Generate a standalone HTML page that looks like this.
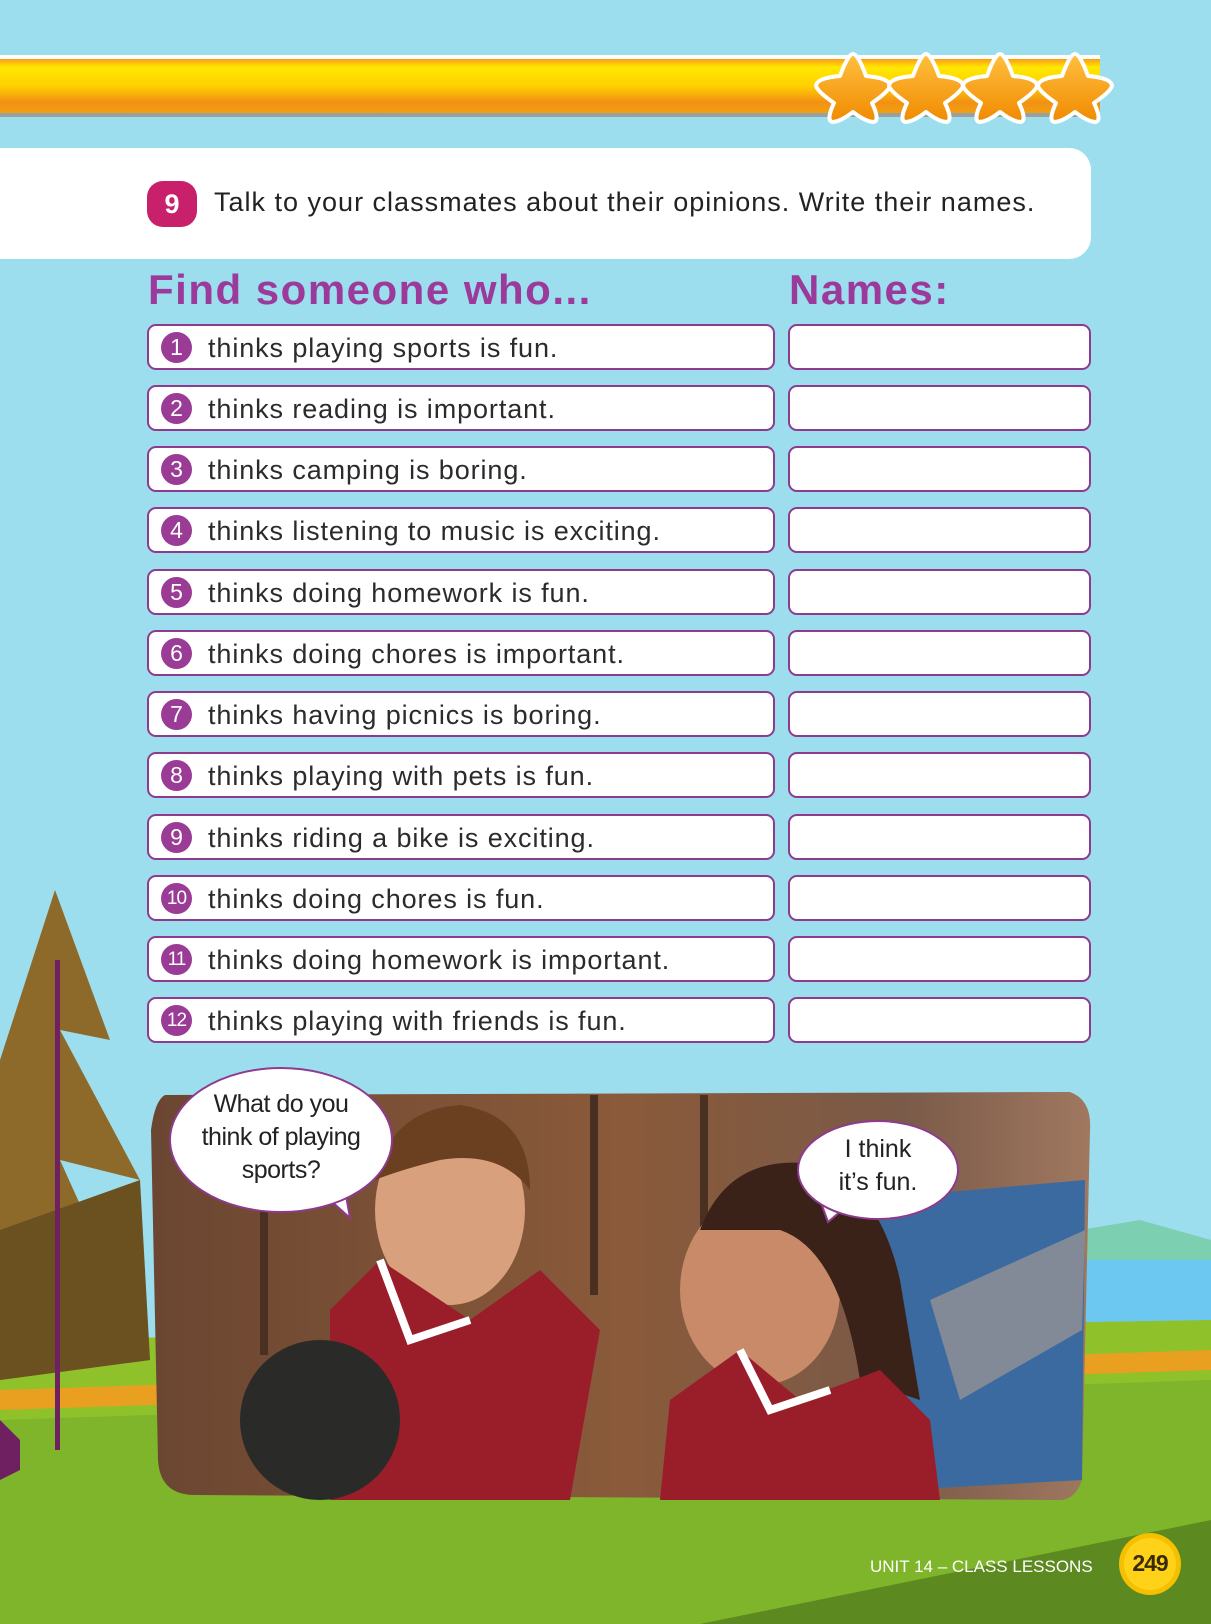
<!DOCTYPE html>
<html><head><meta charset="utf-8"><style>
*{margin:0;padding:0;box-sizing:border-box}
body{width:1211px;height:1624px;overflow:hidden;position:relative;background:#9cdeee;font-family:"Liberation Sans",sans-serif}
.abs{position:absolute}
.row{position:absolute;left:147px;width:628px;height:46px;background:#fff;border:2px solid #8e3a8e;border-radius:9px}
.nm{position:absolute;left:788px;width:303px;height:46px;background:#fff;border:2px solid #8e3a8e;border-radius:9px}
.num{position:absolute;left:12px;top:6px;width:31px;height:31px;border-radius:50%;background:#9a3b96;color:#fff;font-size:23px;text-align:center;line-height:31px}
.num.s{font-size:19px;letter-spacing:-1px}
.tx{position:absolute;left:59px;top:7px;font-size:27px;color:#2b2b2b;white-space:nowrap;letter-spacing:.9px}
</style></head><body>
<svg class="abs" style="left:0;top:0" width="1211" height="1624">
<defs>
<linearGradient id="st" x1="0" y1="0" x2="0" y2="1"><stop offset="0" stop-color="#ff9a1a"/><stop offset=".15" stop-color="#ffe800"/><stop offset=".5" stop-color="#ffd000"/><stop offset=".8" stop-color="#f39015"/><stop offset="1" stop-color="#f0a010"/></linearGradient>
<linearGradient id="sg" x1="0" y1="0" x2="0" y2="1"><stop offset="0" stop-color="#ffc040"/><stop offset="1" stop-color="#f08a00"/></linearGradient>
<linearGradient id="ph" x1="0" y1="0" x2="1" y2="0"><stop offset="0" stop-color="#6b4632"/><stop offset=".5" stop-color="#8a5a3a"/><stop offset=".8" stop-color="#7a5a48"/><stop offset="1" stop-color="#a07860"/></linearGradient>
</defs>
<rect x="0" y="55" width="1100" height="4" fill="#fff"/>
<rect x="0" y="59" width="1100" height="54" fill="url(#st)"/>
<rect x="0" y="113" width="1100" height="4" fill="#9aa0a0"/>
<g fill="url(#sg)" stroke="#fff" stroke-width="4" stroke-linejoin="round">
<path id="s1" d="M853 54 Q858 54 866 76 Q890 78 890 86 Q888 92 872 103 Q880 120 874 122 Q866 122 853 112 Q840 122 832 122 Q826 120 834 103 Q818 92 816 86 Q816 78 840 76 Q848 54 853 54 Z"/>
<use href="#s1" x="73"/><use href="#s1" x="147"/><use href="#s1" x="222"/>
</g>
<path d="M0 1250 L1211 1250 L1211 1624 L0 1624Z" fill="#9cdeee"/>
<path d="M1080 1230 L1140 1220 L1211 1240 L1211 1280 L1080 1280Z" fill="#7ccfb0"/>
<rect x="1080" y="1260" width="131" height="70" fill="#6cc8f0"/>
<path d="M0 1340 L1211 1320 L1211 1624 L0 1624Z" fill="#8fc12a"/>
<path d="M0 1390 L1211 1350 L1211 1370 L0 1410Z" fill="#e9a020"/>
<path d="M0 1420 L1211 1380 L1211 1624 L0 1624Z" fill="#7fb52a"/>
<path d="M700 1624 L1211 1520 L1211 1624Z" fill="#5c8a20"/>
<path d="M0 1060 L55 890 L110 1040 L60 1030 L140 1180 L60 1160 L150 1360 L0 1380Z" fill="#8e6a2a"/>
<path d="M0 1230 L140 1180 L150 1360 L0 1380Z" fill="#6b5020"/>
<rect x="55" y="960" width="5" height="490" fill="#6e2060"/>
<path d="M0 1420 L20 1440 L20 1470 L0 1480Z" fill="#6e2060"/>
<path d="M165 1095 L1070 1092 Q1092 1100 1090 1130 L1082 1480 Q1075 1500 1060 1500 L195 1495 Q160 1495 158 1460 L151 1130 Q155 1100 165 1095Z" fill="url(#ph)"/>
<rect x="260" y="1095" width="8" height="260" fill="#4a3020"/><rect x="590" y="1095" width="8" height="200" fill="#4a3020"/><rect x="700" y="1095" width="8" height="180" fill="#4a3020"/>
<path d="M860 1200 L1085 1180 L1082 1480 L900 1490Z" fill="#3a6aa0"/>
<path d="M930 1300 L1085 1230 L1082 1330 L960 1400Z" fill="#b0a090" opacity=".6"/>
<ellipse cx="450" cy="1210" rx="75" ry="95" fill="#d9a07e"/>
<path d="M375 1180 Q390 1110 460 1105 Q530 1115 530 1190 Q500 1150 440 1160 Q400 1170 375 1180Z" fill="#6a4020"/>
<path d="M330 1310 L380 1260 L470 1320 L540 1270 L600 1330 L570 1500 L330 1500Z" fill="#9a1e2a"/>
<path d="M380 1260 L410 1340 L470 1320" fill="none" stroke="#fff" stroke-width="8"/>
<circle cx="320" cy="1420" r="80" fill="#2a2a28"/>
<ellipse cx="760" cy="1290" rx="80" ry="95" fill="#c98a6a"/>
<path d="M700 1230 Q730 1150 820 1165 Q880 1190 900 1280 L920 1400 L860 1380 Q840 1250 780 1230Z" fill="#3a2218"/>
<path d="M670 1400 L740 1350 L800 1400 L880 1370 L930 1420 L940 1500 L660 1500Z" fill="#9a1e2a"/>
<path d="M740 1350 L770 1410 L830 1390" fill="none" stroke="#fff" stroke-width="8"/>
<path d="M330 1200 L350 1218 L345 1190Z" fill="#fff" stroke="#8e3a8e" stroke-width="2"/>
<ellipse cx="281" cy="1140" rx="111" ry="72" fill="#fff" stroke="#8e3a8e" stroke-width="2"/>
<path d="M820 1200 L828 1222 L848 1205Z" fill="#fff" stroke="#8e3a8e" stroke-width="2"/>
<ellipse cx="878" cy="1170" rx="80" ry="49" fill="#fff" stroke="#8e3a8e" stroke-width="2"/>
<circle cx="1150" cy="1564" r="31" fill="#f5c000"/>
<circle cx="1150" cy="1564" r="26" fill="#ffd21a"/>
</svg>
<div class="abs" style="left:0;top:148px;width:1091px;height:111px;background:#fff;border-radius:0 22px 22px 0"></div>
<div class="abs" style="left:147px;top:181px;width:50px;height:46px;border-radius:16px;background:#c8206a;color:#fff;font-weight:bold;font-size:27px;text-align:center;line-height:46px">9</div>
<div class="abs" style="left:214px;top:187px;font-size:27px;color:#222;white-space:nowrap;letter-spacing:1px">Talk to your classmates about their opinions. Write their names.</div>
<div class="abs" style="left:148px;top:266px;font-size:42px;font-weight:bold;color:#9b3a9a;letter-spacing:1.5px">Find someone who...</div>
<div class="abs" style="left:789px;top:266px;font-size:42px;font-weight:bold;color:#9b3a9a;letter-spacing:1.5px">Names:</div>

<div class="row" style="top:324px"><div class="num">1</div><div class="tx">thinks playing sports is fun.</div></div><div class="nm" style="top:324px"></div>
<div class="row" style="top:385px"><div class="num">2</div><div class="tx">thinks reading is important.</div></div><div class="nm" style="top:385px"></div>
<div class="row" style="top:446px"><div class="num">3</div><div class="tx">thinks camping is boring.</div></div><div class="nm" style="top:446px"></div>
<div class="row" style="top:507px"><div class="num">4</div><div class="tx">thinks listening to music is exciting.</div></div><div class="nm" style="top:507px"></div>
<div class="row" style="top:569px"><div class="num">5</div><div class="tx">thinks doing homework is fun.</div></div><div class="nm" style="top:569px"></div>
<div class="row" style="top:630px"><div class="num">6</div><div class="tx">thinks doing chores is important.</div></div><div class="nm" style="top:630px"></div>
<div class="row" style="top:691px"><div class="num">7</div><div class="tx">thinks having picnics is boring.</div></div><div class="nm" style="top:691px"></div>
<div class="row" style="top:752px"><div class="num">8</div><div class="tx">thinks playing with pets is fun.</div></div><div class="nm" style="top:752px"></div>
<div class="row" style="top:814px"><div class="num">9</div><div class="tx">thinks riding a bike is exciting.</div></div><div class="nm" style="top:814px"></div>
<div class="row" style="top:875px"><div class="num s">10</div><div class="tx">thinks doing chores is fun.</div></div><div class="nm" style="top:875px"></div>
<div class="row" style="top:936px"><div class="num s">11</div><div class="tx">thinks doing homework is important.</div></div><div class="nm" style="top:936px"></div>
<div class="row" style="top:997px"><div class="num s">12</div><div class="tx">thinks playing with friends is fun.</div></div><div class="nm" style="top:997px"></div>

<div class="abs" style="left:170px;top:1088px;width:222px;text-align:center;font-size:25px;line-height:33px;color:#222;letter-spacing:-.5px">What do you<br>think of playing<br>sports?</div>
<div class="abs" style="left:798px;top:1133px;width:160px;text-align:center;font-size:25px;line-height:33px;color:#222">I think<br>it’s fun.</div>
<div class="abs" style="left:870px;top:1557px;font-size:17px;color:#fff;white-space:nowrap">UNIT 14 – CLASS LESSONS</div>
<div class="abs" style="left:1120px;top:1550px;width:60px;text-align:center;font-size:23px;font-weight:bold;color:#3a2a00;letter-spacing:-1px">249</div>
</body></html>
